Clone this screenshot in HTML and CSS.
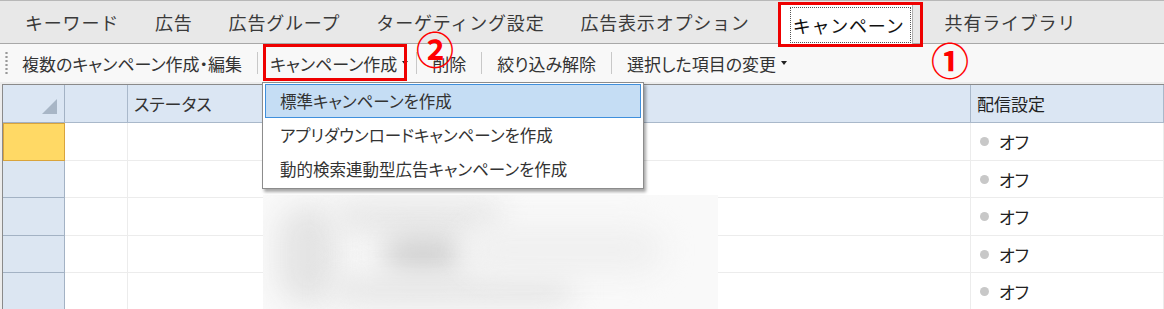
FILE: index.html
```html
<!DOCTYPE html>
<html lang="ja">
<head>
    <meta charset="UTF-8">
    <title>キャンペーン</title>
    <link rel="stylesheet" href="styles.css">
</head>
<body>
<div class="app">

    <nav class="tabs">
        <span class="tab">キーワード</span>
        <span class="tab">広告</span>
        <span class="tab">広告グループ</span>
        <span class="tab">ターゲティング設定</span>
        <span class="tab">広告表示オプション</span>
        <span class="tab active"><span class="focus">キャンペーン</span></span>
        <span class="tab">共有ライブラリ</span>
    </nav>

    <div class="toolbar">
        <span class="grip"></span>
        <span class="tool">複数のキャンペーン作成・編集</span>
        <span class="sep"></span>
        <span class="tool create">キャンペーン作成<span class="caret"></span></span>
        <span class="sep"></span>
        <span class="tool">削除</span>
        <span class="sep"></span>
        <span class="tool">絞り込み解除</span>
        <span class="sep"></span>
        <span class="tool">選択した項目の変更<span class="caret"></span></span>
    </div>

    <div class="grid">
        <div class="cell rowhead corner"><span class="tri"></span></div>
        <div class="cell head"></div>
        <div class="cell head">ステータス</div>
        <div class="cell head last">配信設定</div>

        <div class="cell rowhead current"></div>
        <div class="cell"></div>
        <div class="cell"></div>
        <div class="cell last"><span class="dot"></span>オフ</div>

        <div class="cell rowhead"></div>
        <div class="cell"></div>
        <div class="cell"></div>
        <div class="cell last"><span class="dot"></span>オフ</div>

        <div class="cell rowhead"></div>
        <div class="cell"></div>
        <div class="cell"></div>
        <div class="cell last"><span class="dot"></span>オフ</div>

        <div class="cell rowhead"></div>
        <div class="cell"></div>
        <div class="cell"></div>
        <div class="cell last"><span class="dot"></span>オフ</div>

        <div class="cell rowhead"></div>
        <div class="cell"></div>
        <div class="cell"></div>
        <div class="cell last"><span class="dot"></span>オフ</div>
    </div>

    <!-- blurred (hidden) campaign names -->
    <div class="blurred">
        <span class="blob b1"></span>
        <span class="blob b2"></span>
        <span class="blob b3"></span>
        <span class="blob b4"></span>
        <span class="blob b5"></span>
    </div>

    <ul class="menu">
        <li class="hover">標準キャンペーンを作成</li>
        <li>アプリダウンロードキャンペーンを作成</li>
        <li>動的検索連動型広告キャンペーンを作成</li>
    </ul>

    <!-- annotations -->
    <div class="mark mark-tab"></div>
    <div class="mark mark-create"></div>
    <span class="num num-1">①</span>
    <span class="num num-2">②</span>

</div>
</body>
</html>
```

FILE: styles.css
```css
body {
    margin: 0;
    font-family: "Noto Sans CJK JP", "Noto Sans", sans-serif;
    color: #333;
    background: #fff;
}
.app {
    position: relative;
    width: 1164px;
    height: 309px;
    overflow: hidden;
    background: #ececec;
}

/* tabs */
.tabs {
    display: flex;
    align-items: stretch;
    height: 42px;
    padding-left: 7px;
    background: #e8e8e8;
    border-top: 1px solid #b8b8b8;
    border-bottom: 1px solid #a8a8a8;
}
.tab {
    display: flex;
    align-items: center;
    padding: 0 18px;
    font-size: 18px;
    letter-spacing: 0.8px;
    color: #3a3a3a;
}
.tab.active {
    margin: 3px 14px -1px 12px;
    padding: 0 1px 0 9px;
    background: #fff;
    border: 1px solid #b0b0b0;
    border-bottom: none;
    color: #111;
}
.tab.active .focus {
    padding: 4px 5px 4px 2px;
    border: 1px dotted #555;
}

/* toolbar */
.toolbar {
    display: flex;
    align-items: center;
    height: 38px;
    margin-bottom: 2px;
    padding-left: 5px;
    background: #f8f8f8;
    font-size: 17px;
    font-feature-settings: "palt";
    color: #333;
}
.grip {
    width: 3px;
    height: 24px;
    margin-right: 5px;
    background: radial-gradient(circle, #999 1px, transparent 1.3px) 0 0 / 3px 4px;
}
.tool {
    display: flex;
    align-items: center;
    padding: 0 9px;
}
.tool.create {
    padding: 0 2px 0 6px;
}
.caret {
    width: 0;
    height: 0;
    margin-left: 5px;
    border-left: 3px solid transparent;
    border-right: 3px solid transparent;
    border-top: 4px solid #222;
}
.sep {
    width: 1px;
    height: 22px;
    margin: 0 6px;
    background: #c8c8c8;
}

/* grid */
.grid {
    display: grid;
    grid-template-columns: 62px 63px 843px 1fr;
    grid-template-rows: 38px 38px 37px 38px 37px 37px;
    margin-left: 2px;
    border-top: 1px solid #8a8a8a;
    border-left: 1px solid #8a8a8a;
    background: #fff;
    font-size: 17px;
    font-feature-settings: "palt";
}
.cell {
    box-sizing: border-box;
    display: flex;
    align-items: center;
    border-right: 1px solid #ececec;
    border-bottom: 1px solid #ececec;
}
.cell.last {
    padding-left: 9px;
    color: #222;
}
.head {
    padding-left: 6px;
    background: #dbe6f3;
    border-right: 1px solid #a9b8ca;
    border-bottom: 1px solid #a9b8ca;
    color: #333;
}
.head.last {
    padding-left: 6px;
}
.rowhead {
    background: #dce6f2;
    border-right: 1px solid #a3b2c4;
    border-bottom: 1px solid #a3b2c4;
}
.rowhead.corner {
    position: relative;
    background: #dbe6f3;
}
.tri {
    position: absolute;
    right: 7px;
    bottom: 8px;
    width: 0;
    height: 0;
    border-left: 15px solid transparent;
    border-bottom: 15px solid #a8b6c6;
}
.rowhead.current {
    background: #ffd965;
    border: 1px solid #d9a43c;
}
.dot {
    width: 9px;
    height: 9px;
    margin-right: 10px;
    border-radius: 50%;
    background: #c8c8c8;
}

/* blurred names */
.blurred {
    position: absolute;
    left: 263px;
    top: 195px;
    width: 455px;
    height: 114px;
    overflow: hidden;
    background: #f9f9f9;
}
.blob {
    position: absolute;
    border-radius: 30px;
    background: #e4e4e4;
    filter: blur(14px);
}
.b1 { left: 15px; top: 10px; width: 60px; height: 100px; }
.b2 { left: 70px; top: 5px; width: 170px; height: 35px; background: #e8e8e8; }
.b3 { left: 120px; top: 40px; width: 80px; height: 40px; background: #d2d2d2; }
.b4 { left: 70px; top: 80px; width: 240px; height: 30px; background: #e6e6e6; }
.b5 { left: 200px; top: 30px; width: 200px; height: 50px; background: #f0f0f0; }

/* dropdown */
.menu {
    position: absolute;
    left: 262px;
    top: 82px;
    width: 376px;
    margin: 0;
    padding: 1px 2px 2px;
    list-style: none;
    background: #fff;
    border: 1px solid #8c8c8c;
    box-shadow: 2px 3px 3px rgba(0, 0, 0, 0.35);
    font-size: 16.5px;
    font-feature-settings: "palt";
    color: #333;
}
.menu li {
    height: 32px;
    line-height: 32px;
    padding-left: 14px;
    border: 1px solid transparent;
}
.menu li.hover {
    background: #c5ddf4;
    border-color: #3f8fdc;
}

/* annotations */
.mark {
    position: absolute;
    border: 3px solid #ee0000;
}
.mark-tab {
    left: 778px;
    top: 2px;
    width: 139px;
    height: 39px;
}
.mark-create {
    left: 263px;
    top: 44px;
    width: 138px;
    height: 31px;
}
.num {
    position: absolute;
    font-size: 38px;
    font-weight: bold;
    line-height: 1;
    color: #f00;
}
.num-1 {
    left: 931px;
    top: 40px;
}
.num-2 {
    left: 416px;
    top: 29px;
}
```
